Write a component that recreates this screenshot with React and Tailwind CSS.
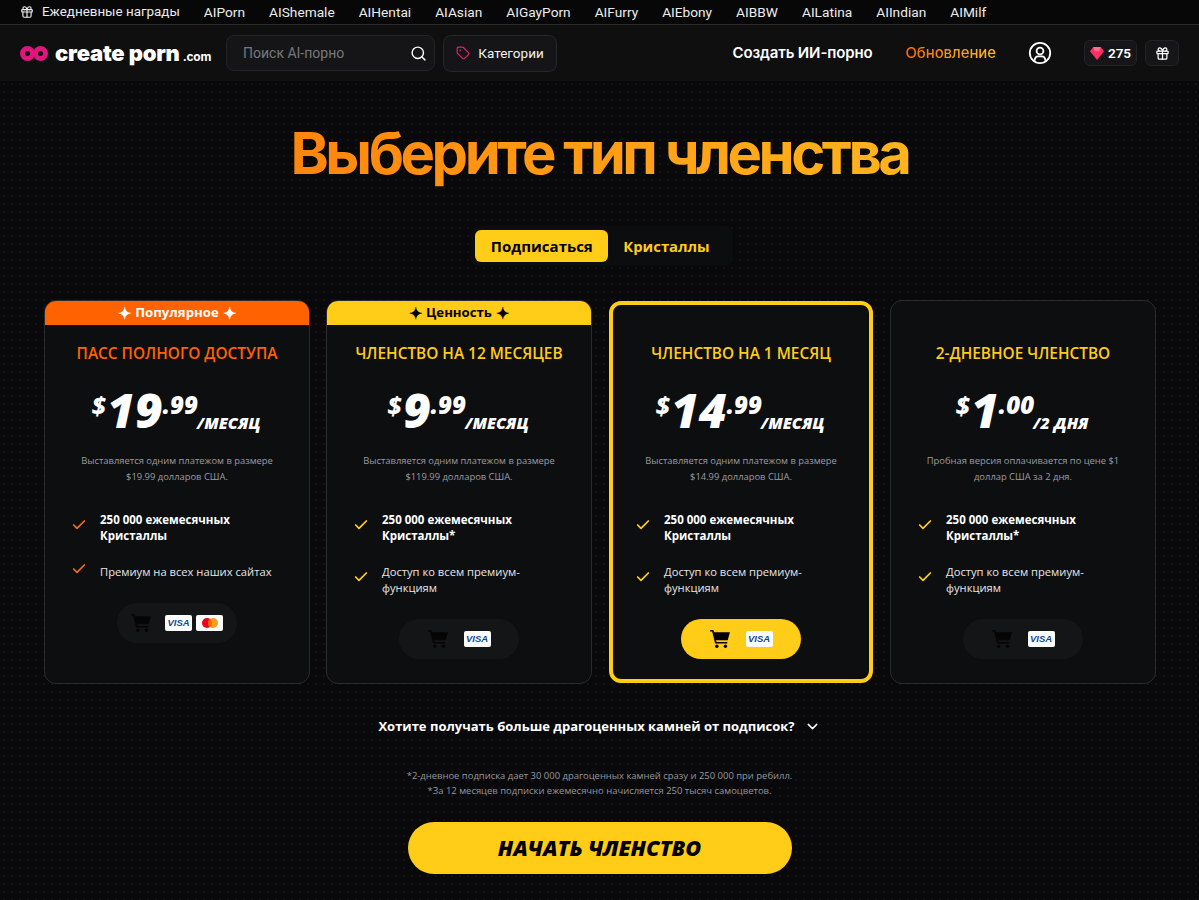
import React from "react";
import { Search, Tag, Gift, ChevronDown, Check } from "lucide-react";

const navItems = ["AIPorn","AIShemale","AIHentai","AIAsian","AIGayPorn","AIFurry","AIEbony","AIBBW","AILatina","AIIndian","AIMilf"];

function Visa(){return <span className="flex h-4 w-[27px] items-center justify-center rounded-[2px] bg-white text-[9.500px] font-bold italic leading-none text-[#12488f] font-['Liberation_Sans',sans-serif]">VISA</span>;}
function Master(){return <span className="flex h-4 w-[27px] items-center justify-center rounded-[2px] bg-white"><svg width="16" height="10" viewBox="0 0 16 10"><circle cx="5" cy="5" r="5" fill="#eb001b"/><circle cx="11" cy="5" r="5" fill="#f79e1b"/><path d="M8 1a5 5 0 0 1 0 8 5 5 0 0 1 0-8z" fill="#ff5f00"/></svg></span>;}
function Cart({cls}){return <svg viewBox="0 0 22 20" width="20" height="18" className={cls} fill="currentColor"><path d="M0 0h3.600l.8 2.400H22l-2.400 9H6.600l.5 1.800h12v1.800H5.600L2.300 1.800H0z"/><circle cx="7.500" cy="18" r="1.900"/><circle cx="17" cy="18" r="1.900"/></svg>;}

function Feature({children,bold,color}){
  return <div className="flex items-center gap-[13px]">
    <Check size={16} strokeWidth={2.6} className={`-translate-y-[3px] shrink-0 ${color}`}/>
    <p className={`leading-4 ${bold?"text-[11.5px] font-bold text-white":"text-[11.2px] font-medium text-[#e7e7e7]"}`}>{children}</p>
  </div>;
}

function Card({badge,badgeCls,title,titleCls,dollar,cents,per,desc1,desc2,f1,f2,check,active,mc}){
  return <div className={`relative overflow-hidden rounded-xl bg-[#0d0e10] ${active?"m-[1px] h-[382px] w-[264px] border-4 border-[#ffcc17]":"h-[384px] w-[266px] border border-[#2a2b2d]"}`}>
    {badge?<div className={`flex h-6 items-center justify-center gap-1 text-[13.200px] font-bold leading-none ${badgeCls}`}><span className="text-[16px]">✦</span>{badge}<span className="text-[16px]">✦</span></div>:null}
    <div className={`flex flex-col items-center ${active?"pt-[40px]":badge?"pt-5":"pt-11"}`}>
      <h3 className={`text-[15.400px] font-semibold leading-[18px] ${titleCls}`}>{title}</h3>
      <div className="mt-[18px] flex h-[52px] -translate-x-[1px] items-start text-white italic font-extrabold">
        <span className="mt-[10px] mr-[1px] text-[25px] leading-7">$</span>
        <span className="mt-[3px] text-[48px] leading-[52px]">{dollar}</span>
        <span className="mt-[10px] text-[24px] leading-7">.{cents}</span>
        <span className="mt-[30px] -ml-[1px] whitespace-nowrap text-[16px] leading-6">/{per}</span>
      </div>
      <div className="mt-[20px] w-[210px] text-center text-[9.400px] leading-4 text-[#9a9ca3]">
        <p>{desc1}</p><p>{desc2}</p>
      </div>
      <div className={`mt-[27px] flex w-full flex-col gap-[20px] ${active?"pl-[22px]":"pl-[26px]"} pr-[30px]`}>
        <Feature bold color={check}>{f1}</Feature>
        <Feature color={check}>{f2}</Feature>
      </div>
      <div className={`mt-[23px] flex h-10 w-[120px] items-center justify-center rounded-full ${active?"bg-[#ffcc17]":"bg-[#141517]"} ${mc?"gap-[14px]":"gap-[16px]"}`}>
        <Cart cls={active?"text-black":"text-[#050505]"}/>
        <span className="flex gap-1"><Visa/>{mc?<Master/>:null}</span>
      </div>
    </div>
  </div>;
}

export default function App(){
  return <div className="h-[900px] overflow-hidden bg-[#09090b] bg-[radial-gradient(circle,#121315_1px,transparent_1.5px)] bg-[length:8px_8px] font-['Open_Sans','Noto_Sans',sans-serif] text-white">
    <div className="flex h-[25px] items-center gap-6 border-b border-[#2b2b2c] bg-[#070708] pl-[20px] text-[13.700px] font-['Roboto',sans-serif] text-[#ececec]">
      <span className="flex items-center gap-2 text-[13.400px]"><Gift size={14}/>Ежедневные награды</span>
      {navItems.map(n=><span key={n}>{n}</span>)}
    </div>
    <header className="flex h-[56px] items-center bg-[#0f0f10] pl-[20px] pr-[20px]">
      <div className="flex w-[206px] items-center gap-[7px]">
        <svg width="28" height="15" viewBox="0 0 28 15" fill="none" stroke="#e0157d" strokeWidth="5"><circle cx="7.500" cy="7.500" r="5"/><circle cx="20.500" cy="7.500" r="5"/></svg>
        <span className="whitespace-nowrap font-['Inter',sans-serif] text-[22px] font-black leading-none tracking-[-0.2px]">create porn<span className="ml-[3px] text-[12px] font-bold">.com</span></span>
      </div>
      <div className="flex h-9 w-[209px] items-center justify-between rounded-lg border border-[#222325] bg-[#151517] pl-4 pr-[7px] text-[14px] font-['Roboto',sans-serif] text-[#77787b]">
        Поиск AI-порно<Search size={17} className="text-white"/>
      </div>
      <div className="ml-2 flex h-[37px] w-[114px] items-center justify-center gap-2 rounded-lg border border-[#26272a] bg-[#151517] text-[13.500px] font-['Roboto',sans-serif] text-[#f1f1f1]">
        <Tag size={14} className="text-[#e0256f]"/>Категории
      </div>
      <span className="ml-auto font-['Inter',sans-serif] text-[15px] font-semibold tracking-[-0.13px]">Создать ИИ-порно</span>
      <span className="ml-[33px] bg-gradient-to-r from-[#f56a05] to-[#ffbe1a] bg-clip-text font-['Inter',sans-serif] text-[15px] font-medium tracking-[-0.1px] text-transparent">Обновление</span>
      <svg className="ml-[32px]" width="24" height="24" viewBox="0 0 24 24" fill="none" stroke="white" strokeWidth="1.800"><circle cx="12" cy="12" r="10.200"/><circle cx="12" cy="10" r="3.400"/><path d="M6.600 19.600c.3-3 2-4.200 3.500-4.200h3.800c1.500 0 3.200 1.200 3.500 4.200"/></svg>
      <div className="ml-[32px] flex h-[26px] w-[53px] items-center justify-center gap-1 rounded-md border border-[#222326] bg-[#161618] text-[13.500px] font-semibold font-['Roboto',sans-serif]">
        <svg width="14" height="13" viewBox="0 0 13 12"><path d="M3 0h7l3 4-6.500 8L0 4z" fill="#ff2e63"/><path d="M3 0h7L8.500 4h-4z" fill="#ff6d8f"/></svg>275
      </div>
      <div className="ml-2 flex h-[26px] w-[34px] items-center justify-center rounded-md border border-[#222326] bg-[#161618]"><Gift size={15}/></div>
    </header>
    <main className="flex flex-col items-center">
      <h1 className="mt-[38px] bg-gradient-to-r from-[#ff850d] to-[#ffb41c] bg-clip-text font-['Inter',sans-serif] text-[58px] font-bold leading-[68px] tracking-[-3.500px] text-transparent">Выберите тип членства</h1>
      <div className="mt-[39px] flex h-10 items-center rounded-lg bg-[#0c0d0f] pl-[5px] pr-[23px] translate-x-[2px]">
        <span className="flex h-8 w-[133px] items-center justify-center rounded-md bg-[#ffcc17] text-[15px] font-bold text-black">Подписаться</span>
        <span className="ml-[15px] text-[14.800px] font-bold text-[#ffcc17]">Кристаллы</span>
      </div>
      <div className="mt-[34px] flex gap-4 self-start pl-[44px]">
        <Card badge="Популярное" badgeCls="bg-[#ff6200] text-white" title="ПАСС ПОЛНОГО ДОСТУПА" titleCls="text-[#ff6200]" dollar="19" cents="99" per="МЕСЯЦ" desc1="Выставляется одним платежом в размере" desc2="$19.99 долларов США." f1="250 000 ежемесячных Кристаллы" f2="Премиум на всех наших сайтах" check="text-[#f26b1d]" mc/>
        <Card badge="Ценность" badgeCls="bg-[#ffcc17] text-black" title="ЧЛЕНСТВО НА 12 МЕСЯЦЕВ" titleCls="text-[#ffcc17]" dollar="9" cents="99" per="МЕСЯЦ" desc1="Выставляется одним платежом в размере" desc2="$119.99 долларов США." f1="250 000 ежемесячных Кристаллы*" f2="Доступ ко всем премиум-функциям" check="text-[#ffcc17]"/>
        <Card active title="ЧЛЕНСТВО НА 1 МЕСЯЦ" titleCls="text-[#ffcc17]" dollar="14" cents="99" per="МЕСЯЦ" desc1="Выставляется одним платежом в размере" desc2="$14.99 долларов США." f1="250 000 ежемесячных Кристаллы" f2="Доступ ко всем премиум-функциям" check="text-[#ffcc17]"/>
        <Card title="2-ДНЕВНОЕ ЧЛЕНСТВО" titleCls="text-[#ffcc17]" dollar="1" cents="00" per="2 ДНЯ" desc1="Пробная версия оплачивается по цене $1" desc2="доллар США за 2 дня." f1="250 000 ежемесячных Кристаллы*" f2="Доступ ко всем премиум-функциям" check="text-[#ffcc17]"/>
      </div>
      <div className="mt-[32px] flex items-center gap-[9px] text-[13px] font-bold leading-5">Хотите получать больше драгоценных камней от подписок?<ChevronDown size={17}/></div>
      <div className="mt-[32px] text-center text-[9.450px] leading-[15px] text-[#96989e]">
        <p>*2-дневное подписка дает 30 000 драгоценных камней сразу и 250 000 при ребилл.</p>
        <p>*За 12 месяцев подписки ежемесячно начисляется 250 тысяч самоцветов.</p>
      </div>
      <button className="mt-[24px] flex h-[52px] w-[384px] items-center justify-center rounded-full bg-[#ffcc17] text-[21.600px] font-extrabold italic text-black">НАЧАТЬ ЧЛЕНСТВО</button>
    </main>
  </div>;
}
